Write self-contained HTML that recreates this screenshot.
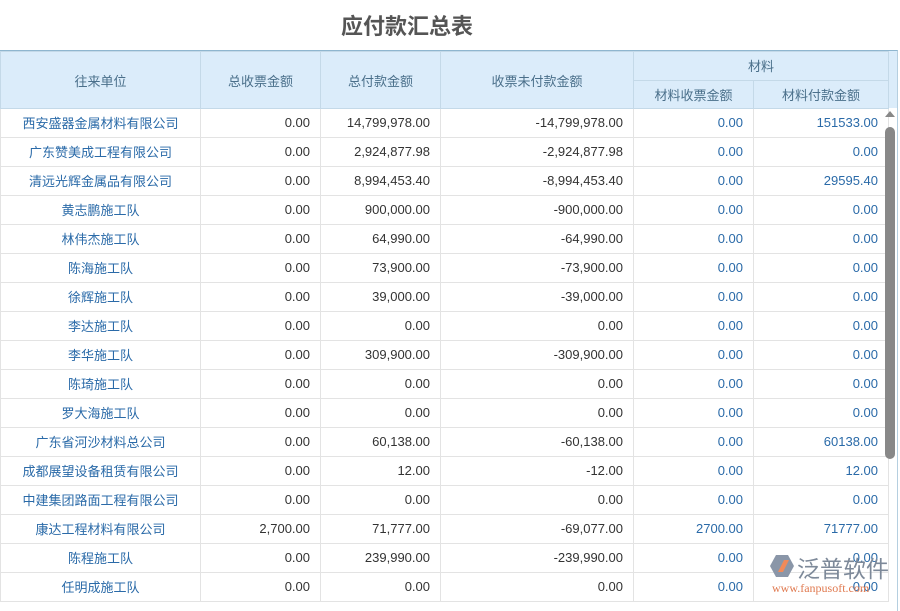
<!DOCTYPE html>
<html><head><meta charset="utf-8"><style>
body{margin:0;width:900px;height:600px;overflow:hidden;background:#fff;font-family:"Liberation Sans","Noto Sans CJK SC",sans-serif;position:relative}
.t{position:absolute;left:341px;top:9px;font-size:22px;font-weight:bold;color:#555;letter-spacing:0}
.wrap{position:absolute;left:0;top:50px;width:897px;height:560px;border-top:1px solid #8fb6cf;border-right:1px solid #b5cfe0;overflow:hidden}
.hx{position:absolute;left:888px;top:0;width:9px;height:57px;background:#dbecfa}
table{position:relative;border-collapse:collapse;table-layout:fixed;width:888px;font-size:13px}
th{background:#dbecfa;color:#4a6f8a;font-weight:normal;border:1px solid #c4d9e8;height:27px;padding:0}
td{height:26px;border:1px solid #e3e3e3;padding:0 10px 2px 0;text-align:right;color:#333}
td.n{text-align:center;color:#2a6aa8;padding:0 0 2px 0}
td.b{color:#2a6aa8}
.sb{position:absolute;left:885px;top:127px;width:10px;height:332px;background:#888;border-radius:5px}
.ar{position:absolute;left:885px;top:111px;width:0;height:0;border-left:5px solid transparent;border-right:5px solid transparent;border-bottom:6px solid #888}
.logo{position:absolute;left:770px;top:553px}
</style></head><body>
<div class="t">应付款汇总表</div>
<div class="wrap"><div class="hx"></div><table>
<colgroup><col style="width:200px"><col style="width:120px"><col style="width:120px"><col style="width:193px"><col style="width:120px"><col style="width:135px"></colgroup>
<tr><th rowspan="2" style="height:56px">往来单位</th><th rowspan="2">总收票金额</th><th rowspan="2">总付款金额</th><th rowspan="2">收票未付款金额</th><th colspan="2">材料</th></tr>
<tr><th>材料收票金额</th><th>材料付款金额</th></tr>
<tr><td class="n">西安盛器金属材料有限公司</td><td>0.00</td><td>14,799,978.00</td><td>-14,799,978.00</td><td class="b">0.00</td><td class="b">151533.00</td></tr>
<tr><td class="n">广东赞美成工程有限公司</td><td>0.00</td><td>2,924,877.98</td><td>-2,924,877.98</td><td class="b">0.00</td><td class="b">0.00</td></tr>
<tr><td class="n">清远光辉金属品有限公司</td><td>0.00</td><td>8,994,453.40</td><td>-8,994,453.40</td><td class="b">0.00</td><td class="b">29595.40</td></tr>
<tr><td class="n">黄志鹏施工队</td><td>0.00</td><td>900,000.00</td><td>-900,000.00</td><td class="b">0.00</td><td class="b">0.00</td></tr>
<tr><td class="n">林伟杰施工队</td><td>0.00</td><td>64,990.00</td><td>-64,990.00</td><td class="b">0.00</td><td class="b">0.00</td></tr>
<tr><td class="n">陈海施工队</td><td>0.00</td><td>73,900.00</td><td>-73,900.00</td><td class="b">0.00</td><td class="b">0.00</td></tr>
<tr><td class="n">徐辉施工队</td><td>0.00</td><td>39,000.00</td><td>-39,000.00</td><td class="b">0.00</td><td class="b">0.00</td></tr>
<tr><td class="n">李达施工队</td><td>0.00</td><td>0.00</td><td>0.00</td><td class="b">0.00</td><td class="b">0.00</td></tr>
<tr><td class="n">李华施工队</td><td>0.00</td><td>309,900.00</td><td>-309,900.00</td><td class="b">0.00</td><td class="b">0.00</td></tr>
<tr><td class="n">陈琦施工队</td><td>0.00</td><td>0.00</td><td>0.00</td><td class="b">0.00</td><td class="b">0.00</td></tr>
<tr><td class="n">罗大海施工队</td><td>0.00</td><td>0.00</td><td>0.00</td><td class="b">0.00</td><td class="b">0.00</td></tr>
<tr><td class="n">广东省河沙材料总公司</td><td>0.00</td><td>60,138.00</td><td>-60,138.00</td><td class="b">0.00</td><td class="b">60138.00</td></tr>
<tr><td class="n">成都展望设备租赁有限公司</td><td>0.00</td><td>12.00</td><td>-12.00</td><td class="b">0.00</td><td class="b">12.00</td></tr>
<tr><td class="n">中建集团路面工程有限公司</td><td>0.00</td><td>0.00</td><td>0.00</td><td class="b">0.00</td><td class="b">0.00</td></tr>
<tr><td class="n">康达工程材料有限公司</td><td>2,700.00</td><td>71,777.00</td><td>-69,077.00</td><td class="b">2700.00</td><td class="b">71777.00</td></tr>
<tr><td class="n">陈程施工队</td><td>0.00</td><td>239,990.00</td><td>-239,990.00</td><td class="b">0.00</td><td class="b">0.00</td></tr>
<tr><td class="n">任明成施工队</td><td>0.00</td><td>0.00</td><td>0.00</td><td class="b">0.00</td><td class="b">0.00</td></tr>
</table></div>
<div class="ar"></div><div class="sb"></div>
<div class="logo">
<svg width="24" height="22" style="position:absolute;left:0;top:2px"><polygon points="6,0 18,0 24,11 18,22 6,22 0,11" fill="#8a96a8"/><path d="M8,17 L14,5 L19,5 L13,17 Z" fill="#f08a5a"/></svg>
<div style="position:absolute;left:27px;top:-3px;font-size:23px;color:#7d8999;white-space:nowrap;font-family:'Noto Sans CJK SC',sans-serif">泛普软件</div>
<div style="position:absolute;left:2px;top:28px;font-size:12px;color:#e07a50;white-space:nowrap;font-family:'Liberation Serif',serif">www.fanpusoft.com</div>
</div>
</body></html>
